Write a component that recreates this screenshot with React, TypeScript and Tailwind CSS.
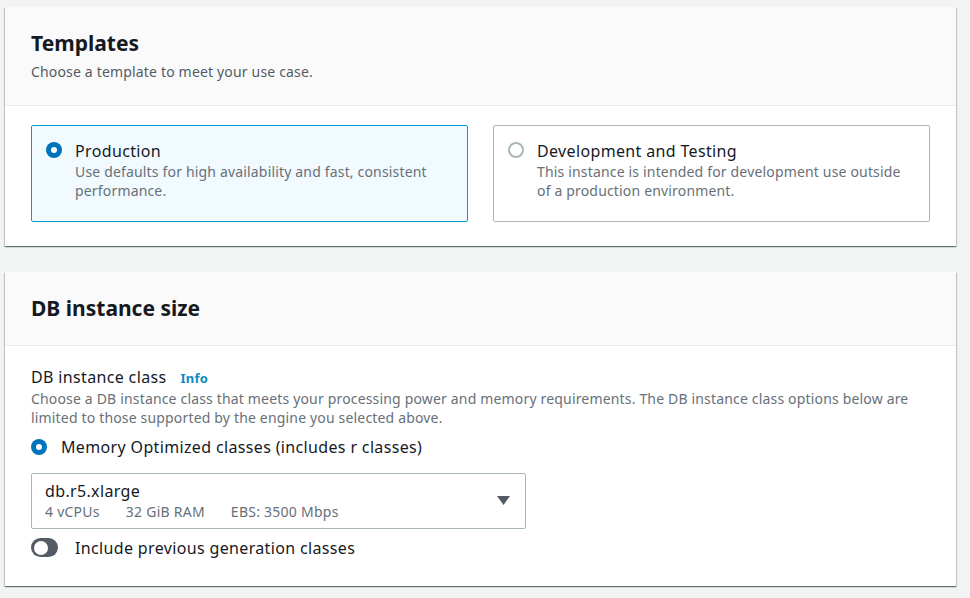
import React from "react";

const font = { fontFamily: '"Noto Sans", "Open Sans", Arial, sans-serif' };

const Radio: React.FC<{ checked?: boolean }> = ({ checked }) =>
  checked ? (
    <span className="mt-[1px] flex h-4 w-4 shrink-0 items-center justify-center rounded-full bg-[#0073bb]">
      <span className="h-[6px] w-[6px] rounded-full bg-white"></span>
    </span>
  ) : (
    <span className="mt-[1px] h-4 w-4 shrink-0 rounded-full border-2 border-[#aab7b8] bg-white"></span>
  );

const Tile: React.FC<{ title: string; desc: string; selected?: boolean }> = ({ title, desc, selected }) => (
  <div
    className={`flex flex-1 gap-[13px] rounded-[2px] border px-[14px] pt-[15px] pb-[21px] ${
      selected ? "border-[#00a1c9] bg-[#f1faff]" : "border-[#aab7b8] bg-white"
    }`}
  >
    <Radio checked={selected} />
    <div>
      <div className="text-[16px] leading-[20px] tracking-[0.35px] text-[#16191f]">{title}</div>
      <div className="mt-[1px] text-[14px] leading-[19px] tracking-[0.17px] text-[#687078]">{desc}</div>
    </div>
  </div>
);

const Card: React.FC<{ children: React.ReactNode }> = ({ children }) => (
  <div className="bg-white shadow-[0_1px_1px_0_rgba(0,28,36,0.45),1px_1px_1px_0_rgba(0,28,36,0.15),-1px_1px_1px_0_rgba(0,28,36,0.15)]">
    {children}
  </div>
);

export default function App() {
  return (
    <div className="min-h-[598px] w-[970px] bg-[#f2f3f3] pl-[5px] pr-[14px] pt-[7px]" style={font}>
      <Card>
        <div className="border-b border-[#eaeded] bg-[#fafafa] px-[26px] pt-[22px] pb-[23px]">
          <h2 className="text-[21px] font-bold leading-[28px] text-[#16191f]">Templates</h2>
          <p className="mt-[5px] text-[14px] leading-[20px] tracking-[0.17px] text-[#545b64]">Choose a template to meet your use case.</p>
        </div>
        <div className="flex gap-[25px] px-[26px] pt-[19px] pb-[24px]">
          <Tile
            selected
            title="Production"
            desc="Use defaults for high availability and fast, consistent performance."
          />
          <Tile
            title="Development and Testing"
            desc="This instance is intended for development use outside of a production environment."
          />
        </div>
      </Card>

      <div className="h-[26px]"></div>

      <Card>
        <div className="border-b border-[#eaeded] bg-[#fafafa] px-[26px] pt-[21px] pb-[22px]">
          <h2 className="text-[21px] font-bold leading-[30px] text-[#16191f]">DB instance size</h2>
        </div>
        <div className="px-[26px] pt-[20px] pb-[27px]">
          <div className="flex items-baseline gap-[14px]">
            <span className="text-[16px] leading-[22px] tracking-[0.35px] text-[#16191f]">DB instance class</span>
            <span className="text-[13px] font-bold tracking-[0.2px] text-[#0a8bc2]">Info</span>
          </div>
          <p className="text-[14px] leading-[19px] tracking-[0.17px] text-[#687078]">
            Choose a DB instance class that meets your processing power and memory requirements. The DB instance class options below are limited to those supported by the engine you selected above.
          </p>
          <div className="mt-[9px] flex items-center gap-[14px]">
            <Radio checked />
            <span className="text-[16px] leading-[22px] tracking-[0.35px] text-[#16191f]">Memory Optimized classes (includes r classes)</span>
          </div>
          <div className="mt-[15px] flex h-[56px] w-[495px] items-center justify-between rounded-[2px] border border-[#aab7b8] pl-[13px] pr-[15px]">
            <div>
              <div className="text-[16px] leading-[21px] tracking-[0.35px] text-[#16191f]">db.r5.xlarge</div>
              <div className="flex gap-[26px] text-[14px] leading-[19px] tracking-[0.25px] text-[#687078]">
                <span>4 vCPUs</span>
                <span>32 GiB RAM</span>
                <span>EBS: 3500 Mbps</span>
              </div>
            </div>
            <svg width="13" height="9" viewBox="0 0 13 9">
              <path d="M0 0 H13 L6.5 9 Z" fill="#545b64" />
            </svg>
          </div>
          <div className="mt-[8px] flex items-center gap-[17px]">
            <span className="flex h-[19px] w-[27px] items-center rounded-full bg-[#545b64] pl-[3px]">
              <span className="h-[14px] w-[14px] rounded-full bg-white"></span>
            </span>
            <span className="text-[16px] leading-[22px] tracking-[0.35px] text-[#16191f]">Include previous generation classes</span>
          </div>
        </div>
      </Card>
    </div>
  );
}
